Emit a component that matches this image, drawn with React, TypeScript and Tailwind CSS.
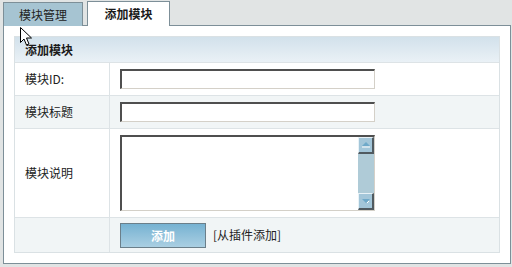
import React from "react";

const font = { fontFamily: '"Noto Sans CJK SC", "Noto Sans", sans-serif' };

function Input() {
  return (
    <div className="w-[255px] h-[20px] bg-white border-t-2 border-l-2 border-b border-r border-t-[#4f4f4f] border-l-[#4f4f4f] border-b-[#d4d0c8] border-r-[#d4d0c8]" />
  );
}

function ScrollBtn({ down }: { down?: boolean }) {
  return (
    <div className="w-[16px] h-[17px] bg-[#a3c6d9] border-t border-l border-t-[#e8f2f7] border-l-[#e8f2f7] border-b-2 border-r-2 border-b-[#505a60] border-r-[#505a60] flex items-center justify-center">
      <svg width="10" height="6" viewBox="0 0 10 6">
        {down ? (
          <>
            <polygon points="1,1 9,1 5,5" fill="#6fa9c9" />
            <line x1="6" y1="5" x2="8" y2="3" stroke="#fff" strokeWidth="1" />
          </>
        ) : (
          <>
            <polygon points="1,4 9,4 5,0" fill="#6fa9c9" />
            <line x1="1" y1="5" x2="9" y2="5" stroke="#fff" strokeWidth="1" />
          </>
        )}
      </svg>
    </div>
  );
}

function TextArea() {
  return (
    <div className="w-[255px] h-[76px] bg-white border-t-2 border-l-2 border-b border-r border-t-[#4f4f4f] border-l-[#4f4f4f] border-b-[#d4d0c8] border-r-[#d4d0c8] flex justify-end">
      <div className="w-[16px] h-full bg-[#afcbd7] flex flex-col justify-between">
        <ScrollBtn />
        <ScrollBtn down />
      </div>
    </div>
  );
}

export default function App() {
  return (
    <div
      className="relative w-[512px] h-[267px] bg-[#e1e4e4] text-[12px] text-[#222] overflow-hidden"
      style={font}
    >
      {/* tabs */}
      <div className="flex items-end h-[26px] pl-[3px] pt-[2px]">
        <div className="w-[80px] h-[24px] bg-[#a6c4d2] border border-b-0 border-[#7d8f98] flex items-center justify-center text-[#222] leading-none">
          模块管理
        </div>
        <div className="relative z-10 ml-[4px] w-[83px] h-[25px] bg-white border border-b-0 border-[#7d8f98] flex items-center justify-center font-bold text-[#1a1a1a] leading-none">
          添加模块
        </div>
      </div>
      {/* panel */}
      <div className="-mt-[1px] ml-[3px] w-[508px] h-[239px] bg-white border border-[#7d8f98] p-[10px]">
        <div className="border border-[#dae1e4] flex flex-col">
          <div className="h-[25px] bg-gradient-to-b from-[#d2e1eb] to-[#eaf1f6] flex items-center pl-[10px] font-bold text-[#1a1a1a] leading-none">
            添加模块
          </div>
          <div className="flex h-[33px] border-t border-[#dde3e6] bg-white">
            <div className="w-[95px] border-r border-[#dde3e6] flex items-center pl-[10px] leading-none">
              模块ID:
            </div>
            <div className="flex-1 pl-[10px] pt-[6px]">
              <Input />
            </div>
          </div>
          <div className="flex h-[33px] border-t border-[#dde3e6] bg-[#f1f5f6]">
            <div className="w-[95px] border-r border-[#dde3e6] flex items-center pl-[10px] leading-none">
              模块标题
            </div>
            <div className="flex-1 pl-[10px] pt-[6px]">
              <Input />
            </div>
          </div>
          <div className="flex h-[89px] border-t border-[#dde3e6] bg-white">
            <div className="w-[95px] border-r border-[#dde3e6] flex items-center pl-[10px] leading-none">
              模块说明
            </div>
            <div className="flex-1 pl-[10px] pt-[6px]">
              <TextArea />
            </div>
          </div>
          <div className="flex h-[35px] border-t border-[#dde3e6] bg-[#f1f5f6]">
            <div className="w-[95px] border-r border-[#dde3e6]" />
            <div className="flex-1 pl-[10px] pt-[5px] flex items-start">
              <div className="w-[86px] h-[25px] border border-[#6b7f8a] bg-gradient-to-b from-[#76b2d2] to-[#aacfe2] flex items-center justify-center text-white font-bold leading-none">
                添加
              </div>
              <span className="ml-[7px] mt-[6px] leading-none text-[#222]">[从插件添加]</span>
            </div>
          </div>
        </div>
      </div>
      {/* mouse cursor */}
      <svg className="absolute left-[19px] top-[26px]" width="14" height="21" viewBox="0 0 14 21">
        <path
          d="M1.5 1.5 L1.5 16.5 L5 13 L7.5 19 L10 18 L7.5 12 L12.5 12 Z"
          fill="#fff"
          stroke="#000"
          strokeWidth="1"
          strokeLinejoin="miter"
        />
      </svg>
    </div>
  );
}
